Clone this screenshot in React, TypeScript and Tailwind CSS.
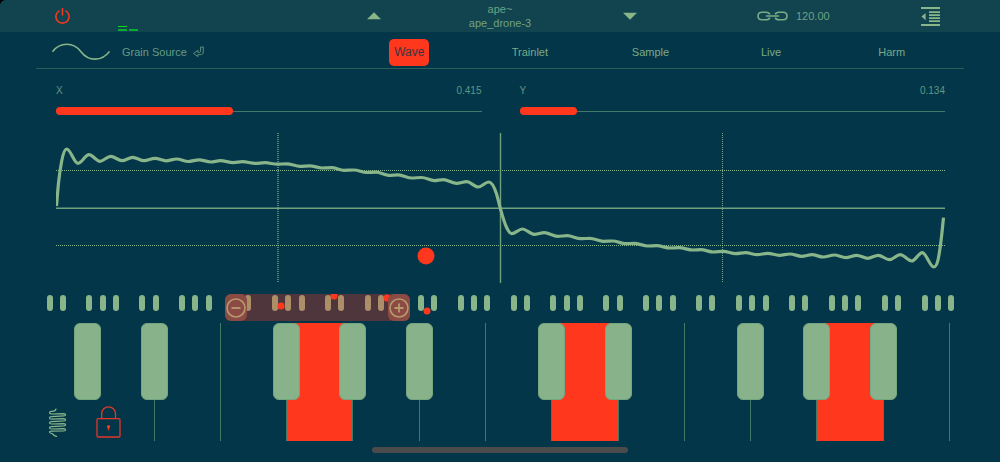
import { useState } from "react";

type Point = [number, number];

const WAVE: Point[] = [
  [0.5, 73], [2.5, 50], [5.7, 28], [10.7, 16], [22, 30.3], [33, 21.7], [44, 28.3], [54.7, 23.3], [66, 27.7],
  [76.7, 24.3], [88, 27.7], [99, 25.3], [110, 27.8], [120.7, 26], [132.3, 28.5], [143, 26.8], [154.7, 29],
  [164.3, 27.7], [177.3, 29.6], [186.7, 28.7], [199, 30.4], [209, 29.7], [221.3, 31.2], [230.7, 30.8],
  [244, 33.3], [254, 32.8], [265.7, 35], [275.7, 34.7], [288, 37.3], [298, 37], [310.7, 39.5], [320, 39.2],
  [333, 42.3], [342.3, 41.8], [355.7, 45], [365.7, 44.5], [378.3, 47.7], [387.3, 46.7], [400.7, 50.3],
  [410.7, 48.7], [422.3, 54], [432.7, 49], [440.4, 60.5], [444.3, 75.3], [450.4, 94], [455.7, 100.7],
  [466.3, 96], [478.3, 101.3], [488.3, 99.7], [501.7, 103.3], [511.3, 102.7], [524.7, 105.7], [534, 105.3],
  [547.3, 108.3], [556.7, 108], [569.7, 110.7], [578, 110.3], [591.7, 113], [600.7, 112.7], [614, 115],
  [623, 114.7], [636.7, 117], [645, 116.7], [657.3, 119], [667.3, 118.3], [679.7, 120.7], [689.7, 119.7],
  [701.3, 121.7], [711.7, 120.3], [723.3, 122.3], [734, 121], [745.7, 123.3], [756, 121.7], [767.3, 124],
  [778.3, 122], [789.7, 124.7], [800.7, 122.3], [811.7, 125.3], [822.3, 122.3], [833.3, 126.7],
  [844.3, 121.7], [855.7, 128], [866.3, 119.7], [877.7, 134], [882, 127], [885, 108],
  [887.5, 84.7],
];

/* Cubic through the points: flat at every crest and trough, evenly curved on the steep flanks. */
function smoothPath(points: Point[]): string {
  const n = points.length;
  const widths = points.slice(1).map((p, i) => p[0] - points[i][0]);
  const slopes = points.slice(1).map((p, i) => (p[1] - points[i][1]) / widths[i]);
  const tangents = points.map((_, i) => {
    if (i === 0) return slopes[0];
    if (i === n - 1) return slopes[n - 2];
    const a = slopes[i - 1];
    const b = slopes[i];
    if (a * b <= 0) return 0;
    if (Math.abs(a) > 1 && Math.abs(b) > 1) {
      return (a * widths[i] + b * widths[i - 1]) / (widths[i] + widths[i - 1]);
    }
    return (2 * a * b) / (a + b);
  });
  let d = `M${points[0][0]},${points[0][1]}`;
  for (let i = 1; i < n; i++) {
    const [x0, y0] = points[i - 1];
    const [x1, y1] = points[i];
    const h = (x1 - x0) / 3;
    d += `C${x0 + h},${y0 + h * tangents[i - 1]} ${x1 - h},${y1 - h * tangents[i]} ${x1},${y1}`;
  }
  return d;
}

const WAVE_PATH = smoothPath(WAVE);
const TABS = ["Wave", "Trainlet", "Sample", "Live", "Harm"];
const NOTE_NAMES = ["C", "D", "E", "F", "G", "A", "B"];
const hasSharp = (i: number) => i % 7 !== 2 && i % 7 !== 6;
const PRESSED = [4, 8, 12];
/* x in percent of the strip, y in pixels from its top */
const DOTS = [
  { x: 28.1, y: 12 },
  { x: 33.4, y: 2 },
  { x: 38.7, y: 4 },
  { x: 42.7, y: 17 },
];

function TopBar() {
  return (
    <header className="grid h-8 grid-cols-[minmax(0,1fr)_270px_minmax(0,1fr)] items-center bg-[#11444e] pl-1 text-[11px] text-[#6fa184]">
      <div className="flex h-full items-center gap-12 pl-[51px]">
        <button aria-label="Power">
          <svg width="15" height="18" viewBox="0 0 15 18" fill="none" stroke="#f5381f" strokeWidth="1.6">
            <path d="M4.6 3.6A6.6 6.6 0 1 0 10.4 3.6" />
            <path d="M7.5 1V8.5" />
          </svg>
        </button>
        <div className="flex items-end gap-0.5 self-end pb-px">
          <div className="flex w-[9px] flex-col gap-0.5">
            <span className="h-px bg-[#00e31a]" />
            <span className="h-0.5 bg-[#0bac35]" />
          </div>
          <span className="h-0.5 w-[9px] bg-[#0bac35]" />
        </div>
      </div>
      <div className="flex items-center justify-between">
        <button aria-label="Previous preset">
          <svg width="14" height="8" viewBox="0 0 14 8" fill="#88b58a"><path d="M0 7.3L7 .3L14 7.3Z" /></svg>
        </button>
        <div className="pr-1 text-center leading-[14px]">
          <p>ape~</p>
          <p>ape_drone-3</p>
        </div>
        <button aria-label="Next preset">
          <svg width="14" height="8" viewBox="0 0 14 8" fill="#88b58a"><path d="M0 .7L7 7.7L14 .7Z" /></svg>
        </button>
      </div>
      <div className="flex items-center justify-between pl-[120px] pr-[60px]">
        <button className="flex items-center gap-2">
          <svg width="31" height="10" viewBox="0 0 31 10" fill="none" stroke="#7aab87" strokeWidth="1.6">
            <path d="M12.8 3.4C12.2 1.8 10.8 1.2 9 1.2H5C2.6 1.2 1 2.6 1 5S2.6 8.8 5 8.8H9C10.8 8.8 12.2 8.2 12.8 6.6" />
            <path d="M18.2 3.4C18.8 1.8 20.2 1.2 22 1.2H26C28.4 1.2 30 2.6 30 5S28.4 8.8 26 8.8H22C20.2 8.8 18.8 8.2 18.2 6.6" />
            <path d="M9.5 5H21.5" strokeLinecap="round" />
          </svg>
          <span>120.00</span>
        </button>
        <button aria-label="Menu">
          <svg width="19" height="19" viewBox="0 0 19 19" fill="#88b58a">
            <path d="M0 0H19V2H0ZM8 4.3H19V6H8ZM8 7.3H19V9H8ZM8 10.3H19V12H8ZM8 13.2H19V14.9H8ZM0 17H19V19H0ZM.5 9.6L4.6 6V13.2Z" />
          </svg>
        </button>
      </div>
    </header>
  );
}

function Param({ label, value }: { label: string; value: number }) {
  return (
    <div className="flex-1 text-[10px] leading-3 text-[#609680]">
      <div className="flex justify-between">
        <label htmlFor={`param-${label}`}>{label}</label>
        <output>{value.toFixed(3)}</output>
      </div>
      <div className="relative mt-[10px] flex h-2 items-center">
        <div className="h-px w-full bg-[#44786a]" />
        <div className="absolute inset-y-0 left-0 rounded-full bg-[#ff371d]" style={{ width: `${value * 100}%` }} />
        <input
          id={`param-${label}`}
          type="range"
          min="0"
          max="1"
          step="0.001"
          defaultValue={value}
          className="absolute inset-0 w-full cursor-pointer opacity-0"
        />
      </div>
    </div>
  );
}

function WaveView() {
  return (
    <div className="relative ml-14 mr-[55px] mt-[18px]">
      <svg className="block h-[150px] w-full" viewBox="0 0 889 150" preserveAspectRatio="none" fill="none">
        <g stroke="#88b58a" strokeWidth="1" strokeDasharray="1 1">
          <path d="M0 37.5H889M0 112.5H889" />
          <path d="M222 0V150" strokeWidth="2" opacity="0.6" />
          <path d="M666.5 0V150" opacity="0.9" />
        </g>
        <path d="M0 75.2H889M444.5 0V150" stroke="#6fa07e" strokeWidth="1.4" />
        <path d={WAVE_PATH} stroke="#88b58a" strokeWidth="3.2" strokeLinejoin="round" />
      </svg>
      <div className="absolute left-[41.6%] top-[82%] size-[17px] -translate-x-1/2 -translate-y-1/2 rounded-full bg-[#ff371d]" />
    </div>
  );
}

function RangeButton({ label, path }: { label: string; path: string }) {
  return (
    <button aria-label={label} className="flex h-full w-[22px] items-center justify-center rounded-md bg-[#8b4a43]">
      <svg width="20" height="20" viewBox="0 0 20 20" fill="none" stroke="#b79b6f" strokeWidth="1.6">
        <circle cx="10" cy="10" r="9" />
        <path d={path} strokeWidth="1.8" />
      </svg>
    </button>
  );
}

function Overview() {
  return (
    <div className="relative mt-[11px] h-[27px]">
      <div className="grid grid-cols-[repeat(70,minmax(0,1fr))] justify-items-center pl-[43px] pr-[29px] pt-px">
        {Array.from({ length: 70 }, (_, i) => (
          <span
            key={i}
            className={[0, 1, 3, 4, 5].includes(i % 7) ? "h-4 w-1.5 rounded-[3px] bg-[#88b58a]" : "h-4 w-1.5"}
          />
        ))}
      </div>
      <div className="absolute inset-y-0 left-[22.5%] w-[18.5%] rounded-md bg-[#ff371d]/30" />
      <div className="absolute inset-0 overflow-hidden">
        {DOTS.map((dot) => (
          <span
            key={dot.x}
            className="absolute size-[7px] -translate-x-1/2 -translate-y-1/2 rounded-full bg-[#ff371d]"
            style={{ left: `${dot.x}%`, top: `${dot.y}px` }}
          />
        ))}
      </div>
      <div className="absolute inset-y-0 left-[22.5%] flex w-[18.5%] justify-between">
        <RangeButton label="Show fewer keys" path="M5.5 10H14.5" />
        <RangeButton label="Show more keys" path="M5.5 10H14.5M10 5.5V14.5" />
      </div>
    </div>
  );
}

function Keyboard() {
  return (
    <div className="relative mt-0.5 grid grid-cols-[repeat(14,minmax(0,1fr))] pl-[22px] pr-[50px]">
      {Array.from({ length: 14 }, (_, i) => (
        <div key={i} className="relative">
          <button
            aria-label={NOTE_NAMES[i % 7]}
            className={`block h-[118px] w-full border-r ${i === 0 ? "border-transparent" : "border-[#447969]"} ${
              PRESSED.includes(i) ? "bg-[#ff371d]" : ""
            }`}
          />
          {hasSharp(i) && (
            <button
              aria-label={`${NOTE_NAMES[i % 7]} sharp`}
              className="absolute -right-[13px] top-0 z-10 h-[77px] w-[27px] rounded-md border border-[#75a67f] bg-[#88b28a]"
            />
          )}
        </div>
      ))}
      <div className="absolute bottom-0 left-12 flex items-end gap-[29px] pb-[3px]">
        <button aria-label="Pitch bend">
          <svg width="19" height="30" viewBox="0 0 19 30" fill="none" stroke="#88b58a" strokeWidth="1.2" strokeLinecap="round">
            <path d="M8 1C7.6 2.8 6 3.4 3.6 3.3C.9 3.2.9 5.8 3.2 6L15.8 5.6C18.2 5.6 18.2 7.7 15.8 7.9L3.4 8.7C.8 8.8.8 11 3.4 11.1L15.8 10.7C18.2 10.7 18.2 12.7 15.8 12.9L3.4 13.6C.8 13.8.8 15.9 3.4 16L15.8 15.6C18.2 15.6 18.2 17.7 15.8 17.9L3.4 18.6C.8 18.8.8 20.9 3.4 21L15.8 20.6C18.2 20.6 18.2 22.9 15.8 23L3.4 23.2C.6 23.4 1.2 25 3.4 25.4C5.6 25.8 5.4 28.2 8.6 28.4" />
          </svg>
        </button>
        <button aria-label="Lock">
          <svg width="25" height="32" viewBox="0 0 25 32" fill="none" stroke="#e2372a" strokeWidth="1.3">
            <rect x="1" y="12.7" width="23" height="18.3" rx="1.2" />
            <path d="M5.7 12.7V7.7A6.9 6.9 0 0 1 19.5 7.7V12.7" />
            <path d="M12.5 21V24.2" strokeWidth="1.5" />
            <circle cx="12.5" cy="20.7" r="1.6" fill="#ff371d" stroke="none" />
          </svg>
        </button>
      </div>
    </div>
  );
}

export default function App() {
  const [tab, setTab] = useState("Wave");
  return (
    <div className="min-h-screen bg-black font-['Liberation_Sans',Arial,sans-serif]">
      <main className="flex min-h-screen flex-col overflow-hidden rounded-tl-[6px] bg-[#033649]">
        <TopBar />
        <section className="mx-9 flex h-[37px] items-center border-b border-[#2b6059] pt-1">
          <button className="flex w-[313px] shrink-0 items-center gap-3 pl-4 text-[11px] text-[#659b82]">
            <svg width="58" height="20" viewBox="0 0 58 20" fill="none" stroke="#88b58a" strokeWidth="1.6">
              <path d="M.5 9.7C8-.2 21.5-.2 29 9.7S50 19.6 57.5 9.4" />
            </svg>
            <span className="flex items-center gap-1.5">
              Grain Source
              <svg width="11" height="12" viewBox="0 0 11 12" fill="none" stroke="currentColor" strokeWidth="0.9" strokeLinejoin="round">
                <path d="M7.6 1H10.3V5.8C10.3 7.8 9.3 8.7 7.4 8.7H4.8V10.6L.6 7.4L4.8 4.3V6.3H6.7C7.4 6.3 7.6 6 7.6 5.4Z" />
              </svg>
            </span>
          </button>
          <nav className="mr-3 grid flex-1 grid-cols-5 justify-items-center">
            {TABS.map((name) => (
              <button
                key={name}
                onClick={() => setTab(name)}
                className={
                  name === tab
                    ? "h-[27px] rounded-[5px] bg-[#ff371d] px-[5px] text-xs text-[#3c3540]"
                    : "h-[27px] px-[5px] text-[11px] text-[#7aab87]"
                }
              >
                {name}
              </button>
            ))}
          </nav>
        </section>
        <section className="ml-14 mr-[55px] mt-4 flex gap-[38px]">
          <Param label="X" value={0.415} />
          <Param label="Y" value={0.134} />
        </section>
        <WaveView />
        <Overview />
        <Keyboard />
        <div className="mx-auto mt-1.5 h-1.5 w-64 rounded-full bg-[#4b4b4b]" />
      </main>
    </div>
  );
}
